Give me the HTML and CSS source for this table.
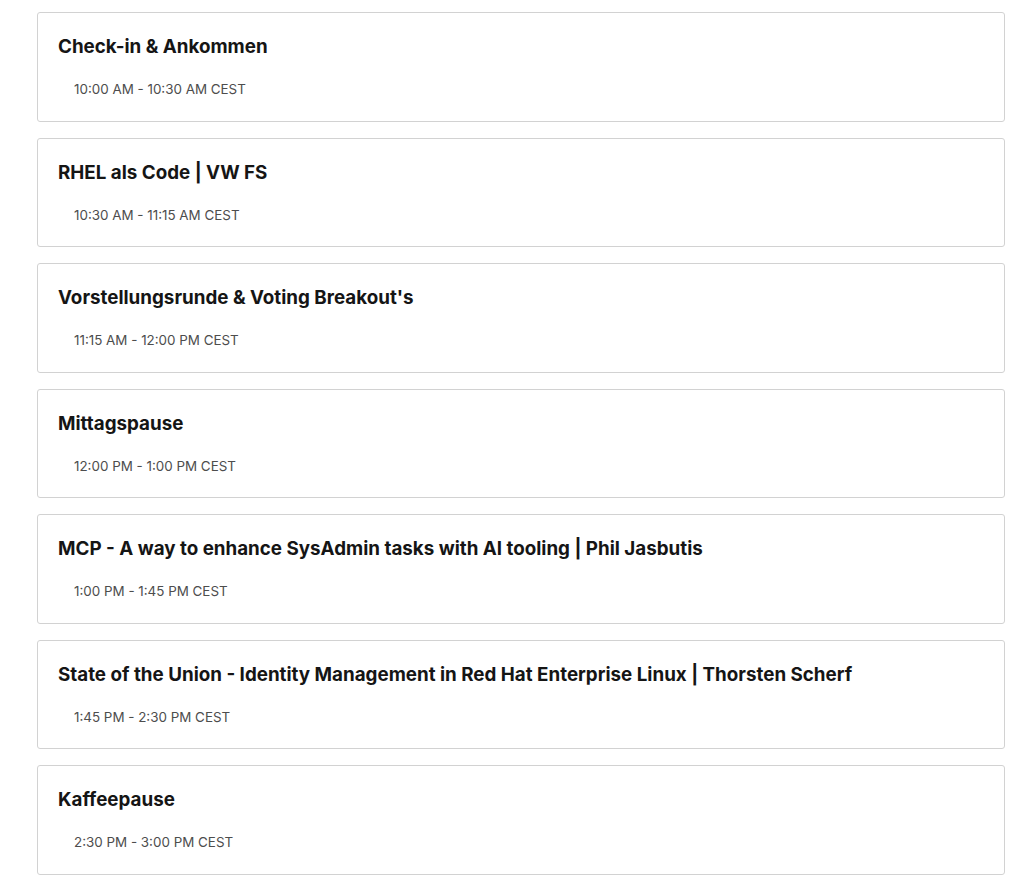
FILE: index.html
```html
<!DOCTYPE html>
<html lang="en">
<head>
    <meta charset="UTF-8">
    <meta name="viewport" content="width=device-width, initial-scale=1.0">
    <title>Agenda</title>
    <link rel="stylesheet" href="styles.css">
</head>
<body>
    <div class="agenda">
        <div class="session">
            <h3 class="session-title">Check-in &amp; Ankommen</h3>
            <div class="session-time">10:00 AM - 10:30 AM CEST</div>
        </div>
        <div class="session">
            <h3 class="session-title">RHEL als Code | VW FS</h3>
            <div class="session-time">10:30 AM - 11:15 AM CEST</div>
        </div>
        <div class="session">
            <h3 class="session-title">Vorstellungsrunde &amp; Voting Breakout's</h3>
            <div class="session-time">11:15 AM - 12:00 PM CEST</div>
        </div>
        <div class="session">
            <h3 class="session-title">Mittagspause</h3>
            <div class="session-time">12:00 PM - 1:00 PM CEST</div>
        </div>
        <div class="session">
            <h3 class="session-title">MCP - A way to enhance SysAdmin tasks with AI tooling | Phil Jasbutis</h3>
            <div class="session-time">1:00 PM - 1:45 PM CEST</div>
        </div>
        <div class="session">
            <h3 class="session-title">State of the Union - Identity Management in Red Hat Enterprise Linux | Thorsten Scherf</h3>
            <div class="session-time">1:45 PM - 2:30 PM CEST</div>
        </div>
        <div class="session">
            <h3 class="session-title">Kaffeepause</h3>
            <div class="session-time">2:30 PM - 3:00 PM CEST</div>
        </div>
    </div>
</body>
</html>
```
FILE: styles.css
```css
* { margin: 0; padding: 0; box-sizing: border-box; }
body {
    font-family: Inter, 'Open Sans', sans-serif;
    background: #fff;
    color: #151515;
}
.agenda {
    width: 968px;
    margin-left: 37px;
    padding-top: 12px;
    display: flex;
    flex-direction: column;
    gap: 16px;
}
.session {
    border: 1px solid #d2d2d2;
    border-radius: 3px;
    height: 109.5px;
    padding: 22px 20px 0 20px;
}
.session-title {
    font-size: 18.8px;
    font-weight: 700;
    line-height: 24px;
    color: #151515;
}
.session-time {
    font-size: 13.4px;
    line-height: 18px;
    color: #4d4d4d;
    margin-top: 21px;
    padding-left: 16px;
}
```
